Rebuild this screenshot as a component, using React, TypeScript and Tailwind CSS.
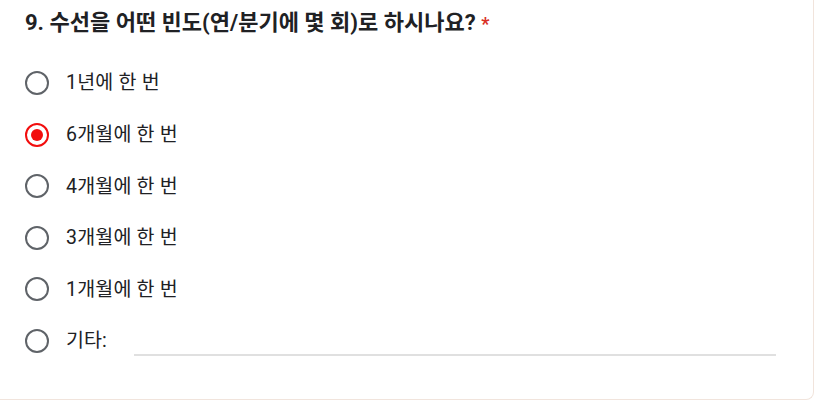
import React from 'react';

const options = ['1년에 한 번', '6개월에 한 번', '4개월에 한 번', '3개월에 한 번', '1개월에 한 번'];

const Radio: React.FC<{ checked?: boolean }> = ({ checked }) => (
  <div
    className={`w-6 h-6 rounded-full border-2 flex items-center justify-center shrink-0 ${
      checked ? 'border-[#f20d0d]' : 'border-[#5f6368]'
    }`}
  >
    {checked && <div className="w-3 h-3 rounded-full bg-[#f20d0d]"></div>}
  </div>
);

const App: React.FC = () => {
  return (
    <div className="w-[821px] h-[404px] bg-white overflow-hidden font-['Roboto','Noto_Sans_CJK_KR',sans-serif]">
      <div className="w-[814px] h-[400px] bg-white border-b border-r border-[#f1e4dc] rounded-br-lg pl-[25px] pt-[9px]">
        <h2 className="text-[22px] font-bold text-[#202124] leading-7">
          9. 수선을 어떤 빈도(연/분기에 몇 회)로 하시나요? <span className="text-[#d93025] text-[18px]">*</span>
        </h2>

        <ul className="mt-[33px] flex flex-col gap-[27.6px]">
          {options.map((label, i) => (
            <li key={label} className="flex items-center h-6">
              <Radio checked={i === 1} />
              <span className="ml-[17px] text-[19.5px] text-[#202124] tracking-[0.2px]">{label}</span>
            </li>
          ))}
          <li className="flex items-center h-6">
            <Radio />
            <span className="ml-[17px] text-[19.5px] text-[#202124]">기타:</span>
            <div className="ml-[27px] mt-[28px] w-[642px] h-[2px] bg-[#e0e0e0]"></div>
          </li>
        </ul>
      </div>
    </div>
  );
};

export default App;
